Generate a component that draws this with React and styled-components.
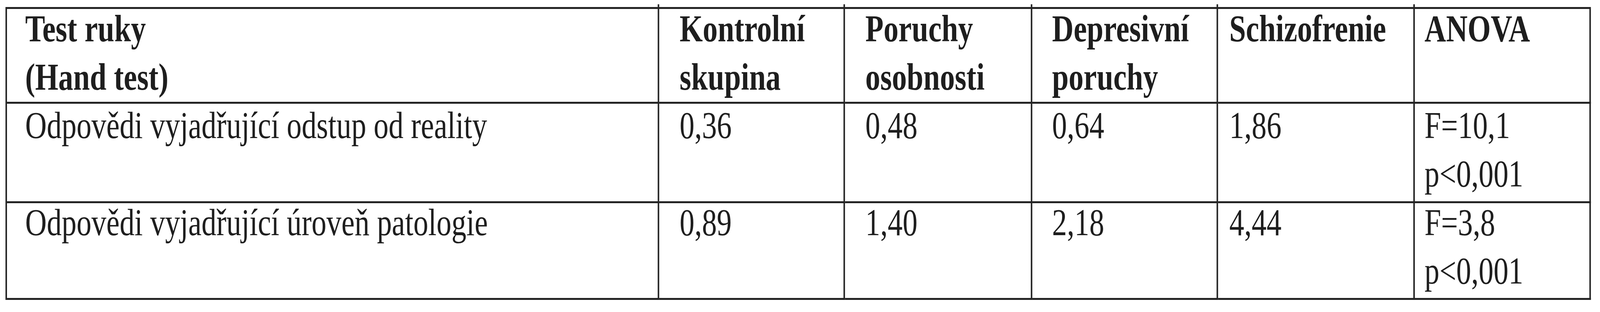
import React from "react";
import styled, { createGlobalStyle } from "styled-components";

const Global = createGlobalStyle`
  html, body { margin: 0; padding: 0; background: #ffffff; overflow: hidden; }
  body { font-family: "Liberation Serif", "Times New Roman", serif; color: #1e1e1e; }
`;

const REF_WIDTH = 5262;

const Page = styled.div`
  padding: 18px 0 0 18px;
  width: ${REF_WIDTH}px;
  height: 800px;
  box-sizing: border-box;
  background: #ffffff;
  transform-origin: 0 0;
`;

const Table = styled.div`
  display: grid;
  grid-template-columns: 2145px 611px 616px 611px 647px 579px;
  grid-template-rows: 243px 255px 248px;
  width: max-content;
  border-left: 5px solid #242424;
  border-top: 5px solid #242424;
`;

const Cell = styled.div`
  position: relative;
  box-sizing: border-box;
  border-right: 5px solid #242424;
  border-bottom: 5px solid #242424;
  padding-left: ${(p) => p.$pad}px;
  font-size: 98px;
  line-height: 124px;
  font-weight: ${(p) => (p.$head ? 700 : 400)};
  color: #1e1e1e;
  white-space: nowrap;

  ${(p) =>
    p.$tick &&
    `
    &::before {
      content: "";
      position: absolute;
      top: -12px;
      right: -5px;
      width: 5px;
      height: 7px;
      background: #242424;
    }
  `}
`;

const Text = styled.div`
  margin-top: ${(p) => p.$shift}px;
`;

const Line = styled.span`
  display: block;
`;

const pads = [60, 67, 67, 65, 37, 32];

const header = [
  ["Test ruky", "(Hand test)"],
  ["Kontrolní", "skupina"],
  ["Poruchy", "osobnosti"],
  ["Depresivní", "poruchy"],
  ["Schizofrenie"],
  ["ANOVA"],
];

const rows = [
  {
    shift: -7,
    cells: [
      ["Odpovědi vyjadřující odstup od reality"],
      ["0,36"],
      ["0,48"],
      ["0,64"],
      ["1,86"],
      ["F=10,1", "p<0,001"],
    ],
  },
  {
    shift: -13,
    cells: [
      ["Odpovědi vyjadřující úroveň patologie"],
      ["0,89"],
      ["1,40"],
      ["2,18"],
      ["4,44"],
      ["F=3,8", "p<0,001"],
    ],
  },
];

function Lines({ items, shift }) {
  return (
    <Text $shift={shift}>
      {items.map((t, i) => (
        <Line key={i}>{t}</Line>
      ))}
    </Text>
  );
}

export default function App() {
  const vw = typeof window !== "undefined" ? window.innerWidth : REF_WIDTH;
  const scale = Math.min(1, vw / REF_WIDTH);
  return (
    <>
      <Global />
      <Page style={{ transform: `scaleX(${scale})` }}>
        <Table>
          {header.map((c, i) => (
            <Cell key={`h${i}`} $head $pad={pads[i]} $tick={i < header.length - 1}>
              <Lines items={c} shift={-12} />
            </Cell>
          ))}
          {rows.map((r, ri) =>
            r.cells.map((c, i) => (
              <Cell key={`r${ri}-${i}`} $pad={pads[i]}>
                <Lines items={c} shift={r.shift} />
              </Cell>
            ))
          )}
        </Table>
      </Page>
    </>
  );
}
